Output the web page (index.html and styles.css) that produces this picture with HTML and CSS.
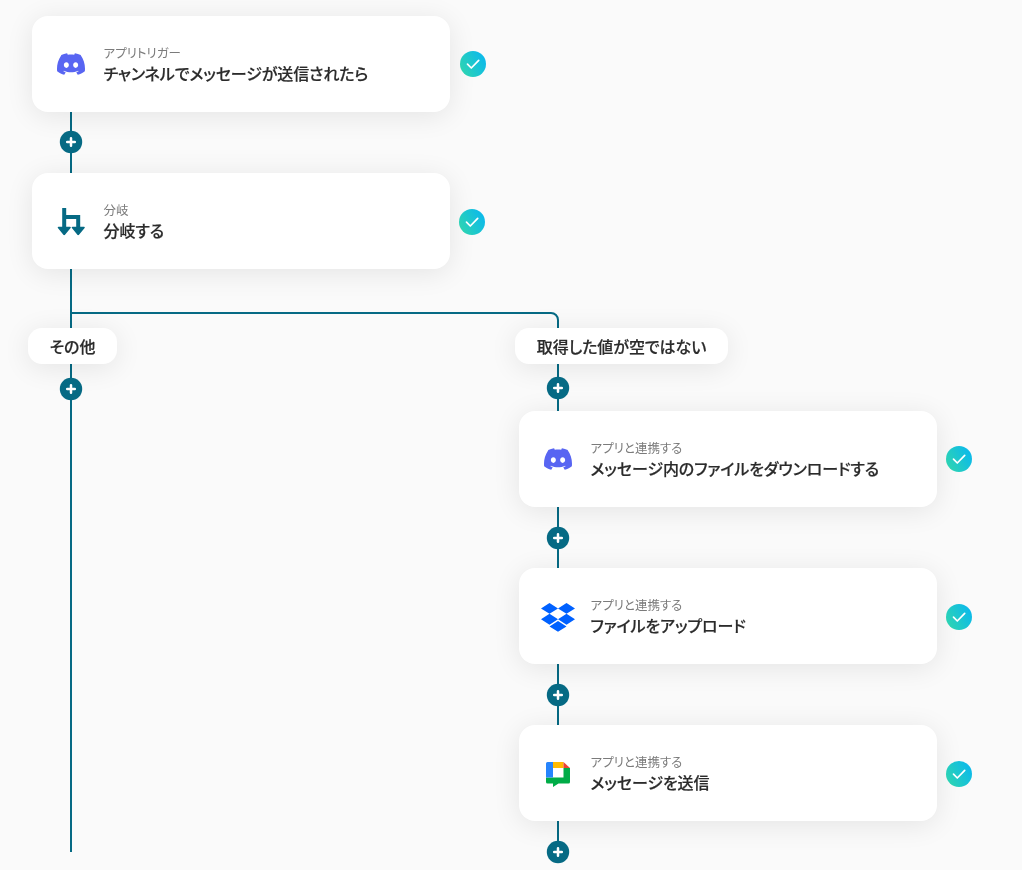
FILE: index.html
```html
<!DOCTYPE html>
<html lang="ja">
<head>
<meta charset="utf-8">
<title>フロー</title>
<link rel="stylesheet" href="styles.css">
</head>
<body>
<svg width="0" height="0" class="defs">
  <symbol id="plus" viewBox="0 0 24 24"><circle cx="12" cy="12" r="11.200" fill="#066a84"/><path d="M12 8.200v7.600M8.200 12h7.600" stroke="#fff" stroke-width="2.500" stroke-linecap="round"/></symbol>
  <linearGradient id="chk" x1="0" y1="0.850" x2="1" y2="0.300"><stop offset="0" stop-color="#30d6ae"/><stop offset="1" stop-color="#0bb9ec"/></linearGradient>
  <symbol id="check" viewBox="0 0 26 26"><circle cx="13" cy="13" r="13" fill="url(#chk)"/><path d="M7.500 13.200l3.800 3.800 7.400-7.600" fill="none" stroke="#fff" stroke-width="1.700" stroke-linecap="round" stroke-linejoin="round"/></symbol>
  <symbol id="discord" viewBox="0 0 24 24"><path fill="#5865f2" d="M20.317 4.3698a19.7913 19.7913 0 00-4.8851-1.5152.0741.0741 0 00-.0785.0371c-.211.3753-.4447.8648-.6083 1.2495-1.8447-.2762-3.68-.2762-5.4868 0-.1636-.3933-.4058-.8742-.6177-1.2495a.077.077 0 00-.0785-.037 19.7363 19.7363 0 00-4.8852 1.515.0699.0699 0 00-.0321.0277C.5334 9.0458-.319 13.5799.0992 18.0578a.0824.0824 0 00.0312.0561c2.0528 1.5076 4.0413 2.4228 5.9929 3.0294a.0777.0777 0 00.0842-.0276c.4616-.6304.8731-1.2952 1.226-1.9942a.076.076 0 00-.0416-.1057c-.6528-.2476-1.2743-.5495-1.8722-.8923a.077.077 0 01-.0076-.1277c.1258-.0943.2517-.1923.3718-.2914a.0743.0743 0 01.0776-.0105c3.9278 1.7933 8.18 1.7933 12.0614 0a.0739.0739 0 01.0785.0095c.1202.099.246.1981.3728.2924a.077.077 0 01-.0066.1276 12.2986 12.2986 0 01-1.873.8914.0766.0766 0 00-.0407.1067c.3604.698.7719 1.3628 1.225 1.9932a.076.076 0 00.0842.0286c1.961-.6067 3.9495-1.5219 6.0023-3.0294a.077.077 0 00.0313-.0552c.5004-5.177-.8382-9.6739-3.5485-13.6604a.061.061 0 00-.0312-.0286zM8.02 15.3312c-1.1825 0-2.1569-1.0857-2.1569-2.419 0-1.3332.9555-2.4189 2.157-2.4189 1.2108 0 2.1757 1.0952 2.1568 2.419 0 1.3332-.9555 2.4189-2.1569 2.4189zm7.9748 0c-1.1825 0-2.1569-1.0857-2.1569-2.419 0-1.3332.9554-2.4189 2.1569-2.4189 1.2108 0 2.1757 1.0952 2.1568 2.419 0 1.3332-.946 2.4189-2.1568 2.4189Z"/></symbol>
</svg>

<main class="canvas">
  <svg class="wires" width="1022" height="870" viewBox="0 0 1022 870" fill="none" stroke="#066a84" stroke-width="2">
    <path d="M71 112V852"/>
    <path d="M71 313H551a7 7 0 0 1 7 7V852"/>
  </svg>

  <article class="node card n1">
    <svg class="icon" width="28" height="28"><use href="#discord"/></svg>
    <div class="copy"><p class="sub">アプリトリガー</p><p class="title">チャンネルでメッセージが送信されたら</p></div>
  </article>
  <article class="node card n2">
    <svg class="icon" width="28" height="29" viewBox="0 0 28 29" fill="#066a84" stroke-linejoin="round">
      <path d="M5.200 1.500h4V8.500h14V21h-4V12.500h-10V21h-4z"/>
      <path d="M1.500 21H13l-5.800 7z" stroke="#066a84" stroke-width="1.600"/>
      <path d="M15.500 21H27l-5.800 7z" stroke="#066a84" stroke-width="1.600"/>
    </svg>
    <div class="copy"><p class="sub">分岐</p><p class="title">分岐する</p></div>
  </article>

  <div class="node pill p1"><span class="pill-text">その他</span></div>
  <div class="node pill p2"><span class="pill-text">取得した値が空ではない</span></div>

  <article class="node card n3">
    <svg class="icon" width="28" height="28"><use href="#discord"/></svg>
    <div class="copy"><p class="sub">アプリと連携する</p><p class="title">メッセージ内のファイルをダウンロードする</p></div>
  </article>
  <article class="node card n4">
    <svg class="icon" width="34" height="34" viewBox="0 -1 24 24" fill="#0061ff"><path d="M6 1.807L0 5.629l6 3.822 6.001-3.822L6 1.807zM18 1.807l-6 3.822 6 3.822 6-3.822-6-3.822zM0 13.274l6 3.822 6.001-3.822L6 9.452l-6 3.822zM18 9.452l-6 3.822 6 3.822 6-3.822-6-3.822zM6 18.371l6.001 3.822 6-3.822-6-3.822L6 18.371z"/></svg>
    <div class="copy"><p class="sub">アプリと連携する</p><p class="title">ファイルをアップロード</p></div>
  </article>
  <article class="node card n5">
    <svg class="icon" width="24" height="28" viewBox="0 -3 24 28">
      <path fill="#00ac47" d="M17.500 6H24v14a1.500 1.500 0 0 1-1.500 1.500H12.500L7 25v-3.500H1.500A1.500 1.500 0 0 1 0 20V15.500h17.500z"/>
      <path fill="#2684fc" d="M1.500 0H7v15.500H0V1.500A1.500 1.500 0 0 1 1.500 0z"/>
      <path fill="#ffba00" d="M7 0h10.500v6H7z"/>
      <path fill="#ea4335" d="M17.500 0L24 6h-6.500z"/>
    </svg>
    <div class="copy"><p class="sub">アプリと連携する</p><p class="title">メッセージを送信</p></div>
  </article>

  <svg class="node dot d1"><use href="#plus"/></svg>
  <svg class="node dot d2"><use href="#plus"/></svg>
  <svg class="node dot d3"><use href="#plus"/></svg>
  <svg class="node dot d4"><use href="#plus"/></svg>
  <svg class="node dot d5"><use href="#plus"/></svg>
  <svg class="node dot d6"><use href="#plus"/></svg>

  <svg class="node tick t1"><use href="#check"/></svg>
  <svg class="node tick t2"><use href="#check"/></svg>
  <svg class="node tick t3"><use href="#check"/></svg>
  <svg class="node tick t4"><use href="#check"/></svg>
  <svg class="node tick t5"><use href="#check"/></svg>
</main>
</body>
</html>
```
FILE: styles.css
```css
* { box-sizing: border-box; }
html, body { margin: 0; padding: 0; }
body {
  background: #fafafa;
  font-family: "Noto Sans CJK JP", "Noto Sans", sans-serif;
  color: #2b2b2b;
  overflow: hidden;
}
.defs { position: absolute; }
.canvas { position: relative; width: 1022px; height: 870px; overflow: hidden; }
.wires { position: absolute; left: 0; top: 0; }
.node { position: absolute; }

.card {
  width: 418px;
  height: 96px;
  background: #fff;
  border-radius: 16px;
  box-shadow: 0 4px 28px rgba(0, 0, 0, 0.09);
  display: flex;
  align-items: center;
}
.icon { flex: none; position: absolute; left: 38.500px; top: 50%; transform: translate(-50%, -50%); }
.copy { margin-left: 71.500px; display: flex; flex-direction: column; will-change: opacity; }
.sub { margin: 0 0 -1px; font-size: 12.500px; line-height: 18px; color: #7b7b7b; font-feature-settings: "palt"; }
.title { margin: 0; font-size: 16px; line-height: 24px; letter-spacing: -0.1px; font-weight: 500; color: #2b2b2b; -webkit-text-stroke: 0.2px #2b2b2b; font-feature-settings: "palt"; }

.n1 { left: 32px; top: 16px; }
.n2 { left: 32px; top: 173px; }
.n3 { left: 519px; top: 411px; }
.n4 { left: 519px; top: 568px; }
.n5 { left: 519px; top: 725px; }

.pill {
  top: 328px;
  height: 36px;
  background: #fff;
  border-radius: 14px;
  box-shadow: 0 4px 28px rgba(0, 0, 0, 0.09);
  display: flex;
  align-items: center;
  justify-content: center;
}
.pill-text {
  font-size: 16px;
  letter-spacing: -0.05px;
  font-weight: 500;
  -webkit-text-stroke: 0.2px #2b2b2b;
  font-feature-settings: "palt";
  will-change: opacity;
}
.p1 { left: 28px; width: 89px; }
.p2 { left: 515px; width: 213px; }

.dot { width: 24px; height: 24px; }
.d1 { left: 58.500px; top: 130px; }
.d2 { left: 58.500px; top: 377px; }
.d3 { left: 546px; top: 376px; }
.d4 { left: 546px; top: 525.500px; }
.d5 { left: 546px; top: 683px; }
.d6 { left: 546px; top: 840px; }

.tick { width: 26px; height: 26px; }
.t1 { left: 460px; top: 51px; }
.t2 { left: 459px; top: 209px; }
.t3 { left: 946px; top: 446px; }
.t4 { left: 946px; top: 604px; }
.t5 { left: 946px; top: 761px; }
```
